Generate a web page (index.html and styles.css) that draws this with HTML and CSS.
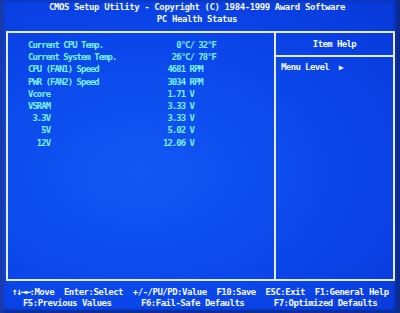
FILE: index.html
```html
<!DOCTYPE html>
<html lang="en">
<head>
    <meta charset="UTF-8">
    <title>PC Health Status</title>
    <link rel="stylesheet" href="styles.css">
</head>
<body>

<div class="screen">
    <div class="title">
        <div class="line">CMOS Setup Utility - Copyright (C) 1984-1999 Award Software</div>
        <div class="line">PC Health Status</div>
    </div>

    <div class="frame">
        <div class="main">
            <div class="row"><span class="label">Current CPU Temp.</span><span class="value">0°C/ 32°F</span></div>
            <div class="row"><span class="label">Current System Temp.</span><span class="value">26°C/ 78°F</span></div>
            <div class="row"><span class="label">CPU (FAN1) Speed</span><span class="value">4681 RPM   </span></div>
            <div class="row"><span class="label">PWR (FAN2) Speed</span><span class="value">3034 RPM   </span></div>
            <div class="row"><span class="label">Vcore</span><span class="value">1.71 V     </span></div>
            <div class="row"><span class="label">VSRAM</span><span class="value">3.33 V     </span></div>
            <div class="row"><span class="label"> 3.3V</span><span class="value">3.33 V     </span></div>
            <div class="row"><span class="label">   5V</span><span class="value">5.02 V     </span></div>
            <div class="row"><span class="label">  12V</span><span class="value">12.06 V     </span></div>
        </div>
        <div class="help">
            <div class="help-head">Item Help</div>
            <div class="help-body">Menu Level  <span class="arrow">&#9654;</span></div>
        </div>
    </div>

    <div class="footer">
        <div class="line"><span class="keys">&#8593;&#8595;&#8594;&#8592;</span>:Move  Enter:Select  +/-/PU/PD:Value  F10:Save  ESC:Exit  F1:General Help</div>
        <div class="line">F5:Previous Values      F6:Fail-Safe Defaults      F7:Optimized Defaults</div>
    </div>
</div>

</body>
</html>
```

FILE: styles.css
```css
/* BIOS colours */
:root {
    --bios-blue: #0a46ea;
    --bios-line: #e4ecff;
    --bios-white: #f4f8ff;
    --bios-cyan: #78f2ff;
}

body {
    margin: 0;
    padding: 0;
    background: #0a2c90;
}

.screen {
    width: 400px;
    height: 313px;
    box-sizing: border-box;
    padding-top: 1px;
    background: radial-gradient(ellipse at 35% 55%, #1258f4 0%, var(--bios-blue) 55%, #0838d8 100%);
    box-shadow: inset 4px 0 3px #1a3aa8, inset -5px 0 3px #0c2a90, inset 0 -3px 3px #0c2a90;
    font-family: "DejaVu Sans Mono", "Liberation Mono", monospace;
    font-weight: bold;
    color: var(--bios-white);
    overflow: hidden;
}

.line,
.label,
.value,
.help-body {
    white-space: pre;
}

.title {
    padding-right: 6px;
    font-size: 9px;
    line-height: 12px;
    letter-spacing: -0.4px;
    text-align: center;
}

.frame {
    display: grid;
    grid-template-columns: 266px 1fr;
    height: 250px;
    margin: 6px 5px 0 6px;
    border: 2px solid var(--bios-line);
    box-sizing: border-box;
}

.main {
    padding: 6px 0 0 20px;
    font-size: 9px;
    line-height: 12.2px;
    color: var(--bios-cyan);
    letter-spacing: -1px;
}

.row {
    display: grid;
    grid-template-columns: 100px 88px;
}

.value {
    text-align: right;
}

.help {
    border-left: 2px solid var(--bios-line);
    font-size: 9px;
    letter-spacing: -0.6px;
}

.help-head {
    height: 22px;
    line-height: 23px;
    text-align: center;
    border-bottom: 2px solid var(--bios-line);
}

.help-body {
    padding: 4px 0 0 5px;
    line-height: 12px;
}

.arrow {
    font-size: 8px;
}

.footer {
    padding-top: 5px;
    font-size: 9px;
    line-height: 11px;
    letter-spacing: -0.5px;
    text-align: center;
}

.keys {
    font-size: 10px;
    letter-spacing: -1.5px;
}
```
